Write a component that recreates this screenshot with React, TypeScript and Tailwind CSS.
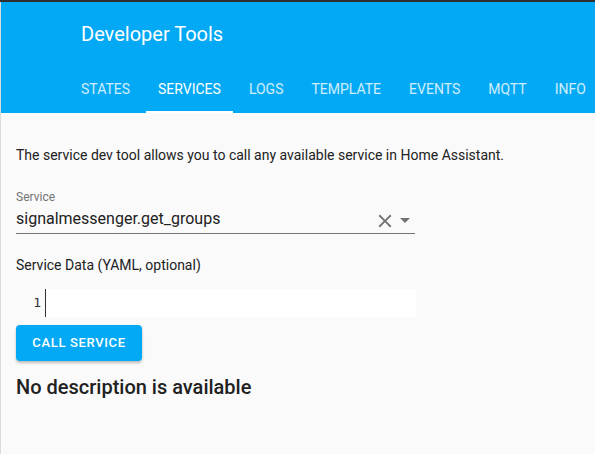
const tabs = ['States', 'Services', 'Logs', 'Template', 'Events', 'MQTT', 'Info'];

export default function App() {
  return (
    <div className="w-[595px] h-[454px] overflow-hidden bg-[#fafafa] border-t-2 border-[#2f2f2f] font-['Roboto',sans-serif]">
      <div className="h-full border-l border-[#dcdcdc]">
        <header className="bg-[#03a9f4] text-white">
          <div className="h-[63px] flex items-center pl-[80px]">
            <h1 className="text-[20px] font-normal">Developer Tools</h1>
          </div>
          <nav className="h-[48px] flex pl-[68px] gap-1 whitespace-nowrap">
            {tabs.map((t) => {
              const active = t === 'Services';
              return (
                <div
                  key={t}
                  className={
                    'relative px-3 flex items-center text-[14px] font-normal uppercase ' +
                    (active ? 'text-white' : 'text-white/80')
                  }
                >
                  {t}
                  {active && <span className="absolute left-0 right-0 bottom-0 h-[2px] bg-white" />}
                </div>
              );
            })}
          </nav>
        </header>

        <main className="px-[15px] pt-[32px]">
          <p className="text-[14px] leading-5 text-[#212121]">
            The service dev tool allows you to call any available service in Home Assistant.
          </p>

          <div className="mt-6 w-[399px] border-b border-[#757575]">
            <div className="text-[12px] leading-4 text-[#737373]">Service</div>
            <div className="flex items-center h-[28px]">
              <span className="flex-1 text-[16px] leading-6 text-[#212121]">signalmessenger.get_groups</span>
              <svg width="22" height="22" viewBox="0 0 24 24" className="mr-[4px] mt-[3px]">
                <path d="M19 6.41L17.59 5 12 10.59 6.41 5 5 6.41 10.59 12 5 17.59 6.41 19 12 13.41 17.59 19 19 17.59 13.41 12z" fill="#727272" />
              </svg>
              <svg width="10" height="5" viewBox="0 0 10 5" className="mr-[5px] mt-[3px]">
                <path d="M0 0l5 5 5-5z" fill="#727272" />
              </svg>
            </div>
          </div>

          <div className="mt-[21px] text-[14px] leading-5 text-[#212121]">Service Data (YAML, optional)</div>

          <div className="mt-[14px] flex w-[400px] h-[28px]">
            <div className="w-[29px] flex items-center justify-end pr-[4px] font-['DejaVu_Sans_Mono',monospace] text-[13px] text-[#333]">
              1
            </div>
            <div className="flex-1 bg-white border-l border-[#333]" />
          </div>

          <button className="mt-[8px] h-[36px] w-[126px] rounded-[4px] bg-[#03a9f4] text-white text-[13px] font-medium tracking-[0.05em] uppercase shadow-[0_2px_3px_rgba(0,0,0,0.25)]">
            Call Service
          </button>

          <h2 className="mt-[14px] text-[20px] leading-6 font-medium text-[#212121]">No description is available</h2>
        </main>
      </div>
    </div>
  );
}
